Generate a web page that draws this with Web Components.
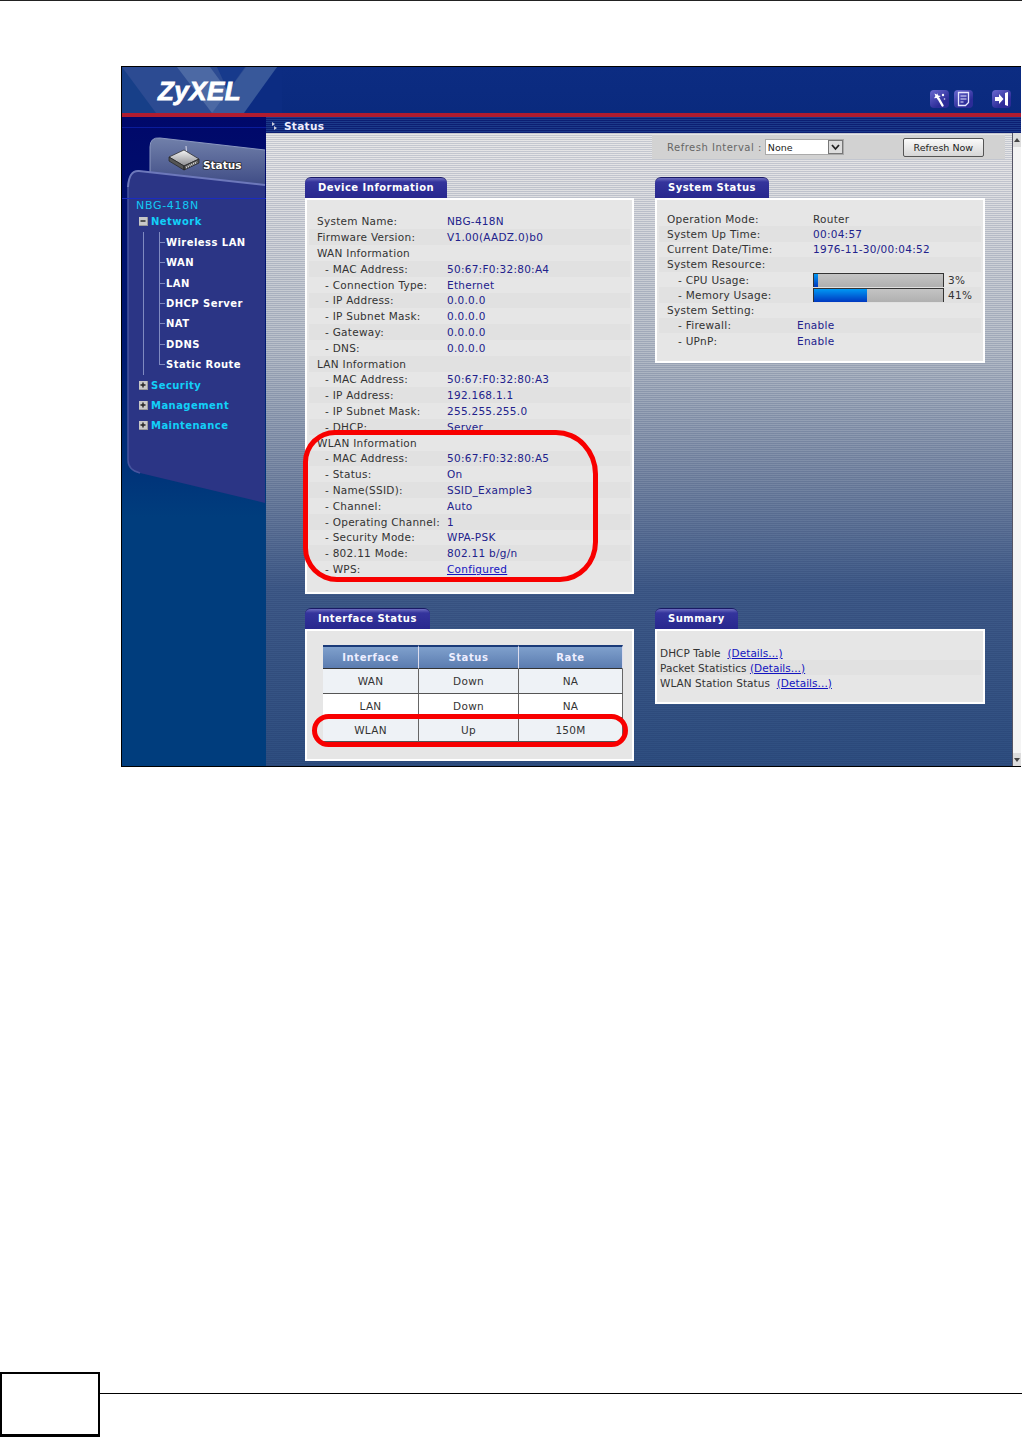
<!DOCTYPE html>
<html lang="en"><head><meta charset="utf-8"><title>Status</title>
<style>
html,body{margin:0;padding:0;background:#fff}
body{font-family:"DejaVu Sans",sans-serif;font-size:10px;width:1022px;height:1437px;overflow:hidden}
</style></head>
<body>
<z-doc>
  <z-shot>
    <z-header slot="header"></z-header>
    <z-sidebar slot="side">
      <z-nav kind="model">NBG-418N</z-nav>
      <z-nav kind="head" icon="minus">Network</z-nav>
      <z-nav kind="sub">Wireless LAN</z-nav>
      <z-nav kind="sub">WAN</z-nav>
      <z-nav kind="sub">LAN</z-nav>
      <z-nav kind="sub">DHCP Server</z-nav>
      <z-nav kind="sub">NAT</z-nav>
      <z-nav kind="sub">DDNS</z-nav>
      <z-nav kind="sub" last>Static Route</z-nav>
      <z-nav kind="head" icon="plus">Security</z-nav>
      <z-nav kind="head" icon="plus">Management</z-nav>
      <z-nav kind="head" icon="plus">Maintenance</z-nav>
    </z-sidebar>
    <z-crumb slot="crumb">Status</z-crumb>
    <z-refresh slot="refresh"></z-refresh>
    <z-card slot="cards" title="Device Information" style="--h:396px;--pt:13.6px;--col:130px">
      <z-row>System Name:<span slot="v">NBG-418N</span></z-row>
      <z-row>Firmware Version:<span slot="v">V1.00(AADZ.0)b0</span></z-row>
      <z-row>WAN Information</z-row>
      <z-row sub>- MAC Address:<span slot="v">50:67:F0:32:80:A4</span></z-row>
      <z-row sub>- Connection Type:<span slot="v">Ethernet</span></z-row>
      <z-row sub>- IP Address:<span slot="v">0.0.0.0</span></z-row>
      <z-row sub>- IP Subnet Mask:<span slot="v">0.0.0.0</span></z-row>
      <z-row sub>- Gateway:<span slot="v">0.0.0.0</span></z-row>
      <z-row sub>- DNS:<span slot="v">0.0.0.0</span></z-row>
      <z-row>LAN Information</z-row>
      <z-row sub>- MAC Address:<span slot="v">50:67:F0:32:80:A3</span></z-row>
      <z-row sub>- IP Address:<span slot="v">192.168.1.1</span></z-row>
      <z-row sub>- IP Subnet Mask:<span slot="v">255.255.255.0</span></z-row>
      <z-row sub>- DHCP:<span slot="v">Server</span></z-row>
      <z-row>WLAN Information</z-row>
      <z-row sub>- MAC Address:<span slot="v">50:67:F0:32:80:A5</span></z-row>
      <z-row sub>- Status:<span slot="v">On</span></z-row>
      <z-row sub>- Name(SSID):<span slot="v">SSID_Example3</span></z-row>
      <z-row sub>- Channel:<span slot="v">Auto</span></z-row>
      <z-row sub>- Operating Channel:<span slot="v">1</span></z-row>
      <z-row sub>- Security Mode:<span slot="v">WPA-PSK</span></z-row>
      <z-row sub>- 802.11 Mode:<span slot="v">802.11 b/g/n</span></z-row>
      <z-row sub>- WPS:<span slot="v"><z-link>Configured</z-link></span></z-row>
    </z-card>
    <z-card slot="cards" title="System Status" style="--h:165px;--pt:11px;--col:146px;--rh:15.25px;--sub:11px">
      <z-row><span>Operation Mode:</span><span slot="v" style="color:#333">Router</span></z-row>
      <z-row>System Up Time:<span slot="v">00:04:57</span></z-row>
      <z-row>Current Date/Time:<span slot="v">1976-11-30/00:04:52</span></z-row>
      <z-row>System Resource:</z-row>
      <z-row sub>- CPU Usage:<z-bar slot="v" value="3"></z-bar></z-row>
      <z-row sub>- Memory Usage:<z-bar slot="v" value="41"></z-bar></z-row>
      <z-row>System Setting:</z-row>
      <z-row sub style="--col:130px">- Firewall:<span slot="v">Enable</span></z-row>
      <z-row sub style="--col:130px">- UPnP:<span slot="v">Enable</span></z-row>
    </z-card>
    <z-card slot="cards" title="Interface Status" style="--h:132px;--pt:14px;--pl:16px">
      <z-table></z-table>
    </z-card>
    <z-card slot="cards" title="Summary" style="--h:75px;--pt:14px;--pl:3px;--rh:15px;--off:2px;--ls:.05px">
      <z-row>DHCP Table&nbsp;&nbsp;<z-link>(Details...)</z-link></z-row>
      <z-row>Packet Statistics&nbsp;<z-link>(Details...)</z-link></z-row>
      <z-row>WLAN Station Status&nbsp;&nbsp;<z-link>(Details...)</z-link></z-row>
    </z-card>
    <z-mark slot="marks" style="left:181px;top:363px;width:295px;height:152px;border-radius:32px 42px 38px 34px/32px 44px 40px 34px"></z-mark>
    <z-mark slot="marks" style="left:190px;top:647px;width:316px;height:33px;border-radius:17px"></z-mark>
  </z-shot>
  <z-foot></z-foot>
</z-doc>
<script>
function el(name, css, html, extra){
  const t=document.createElement('template');
  t.innerHTML='<style>'+css+'</style>'+html;
  customElements.define(name, class extends HTMLElement{
    connectedCallback(){
      if(this.shadowRoot) return;
      const r=this.attachShadow({mode:'open'});
      r.appendChild(t.content.cloneNode(true));
      if(extra) extra(this,r);
    }
  });
}
el('z-doc',':host{display:flex;flex-direction:column;height:1437px;border-top:1px solid #222;box-sizing:border-box}','<slot></slot>');

el('z-shot',`
:host{display:block;position:relative;margin:65px 0 0 121px;width:900px;height:701px;box-sizing:border-box;border:1px solid #000;border-right-width:0;background:#003d7d;overflow:hidden}
.main{display:flex;height:650px}
.side{width:144px;flex:none}
.content{flex:1;min-width:0;display:flex;flex-direction:column;position:relative;
 background:repeating-linear-gradient(180deg,rgba(20,40,90,.16) 0 1px,transparent 1px 2px),linear-gradient(180deg,#e8e8e8 0,#e2e2e4 60px,#b8bfc9 230px,#7888a4 360px,#3f5a88 470px,#2e4e80 650px)}
.scroll{position:absolute;right:0;top:16px;bottom:0;width:9px;background:#f4f4f4;border-left:1px solid #556;display:flex;flex-direction:column;justify-content:space-between;box-sizing:border-box}
.scroll svg{display:block;background:#ddd}
.body{flex:1;padding:2px 9px 0 39px;display:flex;flex-direction:column;align-items:flex-start}
.grid{display:grid;grid-template-columns:329px 330px;column-gap:21px;row-gap:14px;align-items:start;margin-top:18px}
`,`<slot name="header"></slot>
<div class="main">
 <div class="side"><slot name="side"></slot></div>
 <div class="content">
  <slot name="crumb"></slot>
  <div class="body"><slot name="refresh"></slot><div class="grid"><slot name="cards"></slot></div></div>
  <div class="scroll"><svg width="8" height="14" viewBox="0 0 8 14"><path d="M1 9l3-4 3 4z" fill="#444"/></svg><svg width="8" height="14" viewBox="0 0 8 14"><path d="M1 5l3 4 3-4z" fill="#444"/></svg></div>
 </div>
</div>
<slot name="marks"></slot>`);

el('z-header',`
:host{display:block;height:50px;position:relative;background:linear-gradient(#0c2c82,#0a2a7e);box-sizing:border-box;border-bottom:4px solid #b01c30}
svg.bg{position:absolute;left:0;top:0}
.logo{position:absolute;left:36px;top:6px;font:italic 700 26px/36px "Liberation Sans",sans-serif;letter-spacing:.4px;color:#fff;-webkit-text-stroke:.8px #fff}
.icons{position:absolute;left:808px;top:23px;display:flex}
.ic{width:19px;height:18px;border-radius:4px;background:linear-gradient(145deg,#6a6ad0,#2c2c98 70%);display:block;margin-right:5px}
.ic:last-child{margin-left:14px;margin-right:0}
`,`<svg class="bg" width="160" height="46" viewBox="0 0 160 46">
<rect width="160" height="46" fill="#0c2c82"/>
<polygon points="0,0 155,0 110,46 0,46" fill="#2c4b92"/>
<polygon points="0,0 34,46 0,46" fill="#173f88"/>
<polygon points="55,0 88,0 122,46 90,46" fill="#4c69a4"/>
<polygon points="124,0 155,0 122,46 90,46" fill="#38589a"/>
<polygon points="95,0 123,0 106,24" fill="#173a8c"/>
</svg>
<span class="logo">ZyXEL</span>
<div class="icons">
<svg class="ic" viewBox="0 0 19 18"><path d="M8.500 8.500l4 7" stroke="#fff" stroke-width="2.400" stroke-linecap="round"/><path d="M7 3l1.200 2.400 2.600.6-2.200 1.400-.4 2.600-1.600-2-2.600.2 1.400-2.200-1-2.400 2.600.8z" fill="#fff"/><circle cx="13" cy="5" r="1.200" fill="#fff"/><circle cx="14.500" cy="9" r=".8" fill="#dde"/></svg>
<svg class="ic" viewBox="0 0 19 18"><path d="M4.500 2.500h10v10l-3 3h-7z" fill="none" stroke="#e8e8ff" stroke-width="1.300"/><path d="M6.500 6h6M6.500 9h6M6.500 12h3" stroke="#e8e8ff"/></svg>
<svg class="ic" viewBox="0 0 19 18"><path d="M3 7h4V4l4.500 5L7 14v-3H3z" fill="#fff"/><path d="M13 3l3-1v14l-3-1z" fill="#fff"/></svg>
</div>`);

el('z-sidebar',`
:host{display:block;position:relative;height:650px;box-sizing:border-box;padding-top:81.8px;background:linear-gradient(180deg,#00086a 0,#001a70 240px,#003d7d 400px,#003d7d 100%)}
svg{position:absolute;left:0;top:0}
.items{position:relative}
`,`<svg width="144" height="400" viewBox="0 0 144 400">
<defs>
<linearGradient id="t" x1="0" y1="0" x2="0" y2="1"><stop offset="0" stop-color="#7180aa"/><stop offset="1" stop-color="#3d4a84"/></linearGradient>
<linearGradient id="r" x1="0" y1="0" x2="0" y2="1"><stop offset="0" stop-color="#f4f4f4"/><stop offset="1" stop-color="#8c8c90"/></linearGradient>
</defs>
<rect x="0" y="10" width="144" height="1" fill="#0a1c9c"/>
<path d="M28 62V30Q28 20 38 21L143 33V70H28z" fill="url(#t)"/>
<path d="M28 62V30Q28 20 38 21L143 33" fill="none" stroke="#8b98c0"/>
<path d="M6 70Q7 53 17 54L143 68V386L18 356Q6 353 6 343z" fill="#2b3585"/>
<path d="M6 70Q7 53 17 54L143 68" fill="none" stroke="#6d78bb" stroke-width="2"/>
<path d="M6 70V343Q6 353 18 356" fill="none" stroke="#47549f" stroke-width="1.500"/>
<rect x="0" y="81" width="144" height="1" fill="#1a2cc0"/>
<path d="M64 29l1 13" stroke="#dde" stroke-width="1"/>
<path d="M47 40L62 33 77 42 62 49z" fill="url(#r)" stroke="#222" stroke-width=".7"/>
<path d="M47 40L47 44 62 53 62 49zM62 49L77 42 77 46 62 53z" fill="#555" stroke="#222" stroke-width=".7"/>
<path d="M64 50.500l11-5.500" stroke="#ddd" stroke-dasharray="1 1" stroke-width="2"/>
<text x="81" y="52" font-family="DejaVu Sans,sans-serif" font-size="10.500" font-weight="700" fill="#fff" stroke="#222" stroke-width="1.500" paint-order="stroke">Status</text>
</svg><div class="items"><slot></slot></div>`);

el('z-nav',`
:host{display:flex;align-items:center;height:20.4px;box-sizing:border-box;font-size:10px;white-space:nowrap;letter-spacing:.45px}
:host([kind=model]){height:13px;padding-left:14px;color:#12c8f4;font-size:11px;letter-spacing:.7px}
:host([kind=head]){padding-left:17px;color:#12d0f8;font-weight:700}
:host([kind=sub]){padding-left:44px;color:#fff;font-weight:700;
 background:linear-gradient(#7f8ac0,#7f8ac0) 21px 0/1px 100% no-repeat,linear-gradient(#7f8ac0,#7f8ac0) 37px 0/1px 100% no-repeat,linear-gradient(#7f8ac0,#7f8ac0) 37px 50%/6px 1px no-repeat}
:host([last]){background:linear-gradient(#7f8ac0,#7f8ac0) 21px 0/1px 100% no-repeat,linear-gradient(#7f8ac0,#7f8ac0) 37px 0/1px 50% no-repeat,linear-gradient(#7f8ac0,#7f8ac0) 37px 50%/6px 1px no-repeat}
.i{display:none;width:9px;height:9px;margin-right:3px;flex:none}
:host([kind=head]) .i{display:block}
`,`<svg class="i" viewBox="0 0 9 9"><rect width="9" height="9" fill="#9a9a9a"/><rect x="0" y="0" width="8" height="8" fill="#c8c8c8"/><path class="p" d="M1.500 4h5" stroke="#222" stroke-width="1.400"/></svg><slot></slot>`,
(h,r)=>{ if(h.getAttribute('icon')==='plus'){ r.querySelector('.p').setAttribute('d','M1.500 4h5M4 1.500v5'); } });

el('z-crumb',`
:host{display:flex;align-items:center;height:16px;flex:none;box-sizing:border-box;padding:1px 0 0 6px;color:#eef;font-weight:700;font-size:10.500px;letter-spacing:.3px;
 background:repeating-linear-gradient(180deg,#1c3a8a 0 1px,#0c1e72 1px 2px)}
svg{margin-right:6px}
`,`<svg width="6" height="8" viewBox="0 0 6 8"><path d="M0 0l3 2-3 2zM2 4l3 2-3 2z" fill="#ccd"/></svg><slot></slot>`);

el('z-refresh',`
:host{display:flex;align-items:center;margin-left:347px;width:353px;height:24px;box-sizing:border-box;padding-left:15px;background:#d2d2d2;color:#666;letter-spacing:.5px;white-space:nowrap}
.sel{display:flex;align-items:center;justify-content:space-between;margin-left:3px;width:79px;height:16px;box-sizing:border-box;background:#fff;border:1px solid #aaa;padding-left:2px;color:#222;font-size:9.500px;letter-spacing:0}
.sel b{display:flex;align-items:center;justify-content:center;width:15px;height:14px;background:#ddd;border:1px solid #777;box-sizing:border-box}
.btn{margin-left:59px;width:81px;height:19px;box-sizing:border-box;border:1px solid #555;border-radius:2px;background:linear-gradient(#fafafa,#d6d6d6);color:#222;display:flex;align-items:center;justify-content:center;font-size:9.500px;letter-spacing:0}
`,`<span>Refresh Interval :</span><span class="sel">None<b><svg width="9" height="7" viewBox="0 0 9 7"><path d="M1 1l3.500 4L8 1" fill="none" stroke="#222" stroke-width="1.800"/></svg></b></span><span class="btn">Refresh Now</span>`);

el('z-card',`
:host{display:block}
.tab{display:inline-block;height:21px;line-height:19px;vertical-align:bottom;box-sizing:border-box;padding:0 13px;border-radius:6px 6px 0 0;background:linear-gradient(180deg,#6d6dc0 0,#34349c 4px,#28288e 100%);color:#fff;font-weight:700;font-size:10px;letter-spacing:.48px;white-space:nowrap;border-top:1px solid #1a1a66}
.body{height:var(--h,100px);box-sizing:border-box;background:#e6e6e6;border:2px solid #fff;padding:var(--pt,12px) 2px 0 var(--pl,10px)}
`,`<div style="display:flex"><span class="tab"></span></div><div class="body"><slot></slot></div>`,
(h,r)=>{ r.querySelector('.tab').textContent=h.getAttribute('title'); h.removeAttribute('title'); });

el('z-row',`
:host{display:flex;align-items:center;height:var(--rh,15.8px);margin-left:calc(var(--off,8px)*-1);padding-left:var(--off,8px);color:#333;font-size:10.500px;letter-spacing:var(--ls,.27px);white-space:nowrap}
:host(:nth-child(even)){background:#e1e1e1}
.l{display:flex;align-items:center;width:var(--col,auto);flex:none;box-sizing:border-box}
:host([sub]) .l{padding-left:var(--sub,8px)}
.v{color:#22228c}
`,`<span class="l"><slot></slot></span><span class="v"><slot name="v"></slot></span>`);

el('z-link',`:host{color:#1414c0;text-decoration:underline;display:inline}`,`<slot></slot>`);

el('z-bar',`
:host{display:flex;align-items:center;color:#333}
.t{display:block;width:131px;height:14px;box-sizing:border-box;background:linear-gradient(#c4c4c4,#b0b0b0);border:1px solid #333;border-width:1px 1px 0 1px}
.f{display:block;height:100%;background:linear-gradient(#0098f4,#0038c0)}
.n{margin-left:4px}
`,`<span class="t"><span class="f"></span></span><span class="n"></span>`,
(h,r)=>{const v=h.getAttribute('value');r.querySelector('.f').style.width=v+'%';r.querySelector('.n').textContent=v+'%';});

el('z-table',`
:host{display:grid;grid-template-columns:96px 100px 104px;width:300px;color:#333;font-size:10.500px;letter-spacing:.27px;text-align:center}
div{height:24.300px;line-height:24.500px;box-sizing:border-box;background:#eef2f6;border-bottom:1px solid #555;border-right:1px solid #666}
.h{background:linear-gradient(#7fa0cc,#5b7cb0);border-top:2px solid #1a3a78;border-bottom:1px solid #333;border-right:1px solid #dde;color:#eef;font-weight:700;font-size:10px;letter-spacing:.6px;line-height:21px}
.w{background:#fff}
`,`<div class="h">Interface</div><div class="h">Status</div><div class="h">Rate</div>
<div>WAN</div><div>Down</div><div>NA</div>
<div class="w">LAN</div><div class="w">Down</div><div class="w">NA</div>
<div>WLAN</div><div>Up</div><div>150M</div>`);

el('z-mark',`:host{display:block;position:absolute;box-sizing:border-box;border:5px solid #f80000}`,``);

el('z-foot',`
:host{display:flex;margin-top:605px;height:65px}
.b{width:100px;height:65px;box-sizing:border-box;border:2px solid #000;border-bottom-width:3px;flex:none}
.l{flex:1;height:1px;background:#000;margin-top:21px}
`,`<div class="b"></div><div class="l"></div>`);
</script>
</body></html>
